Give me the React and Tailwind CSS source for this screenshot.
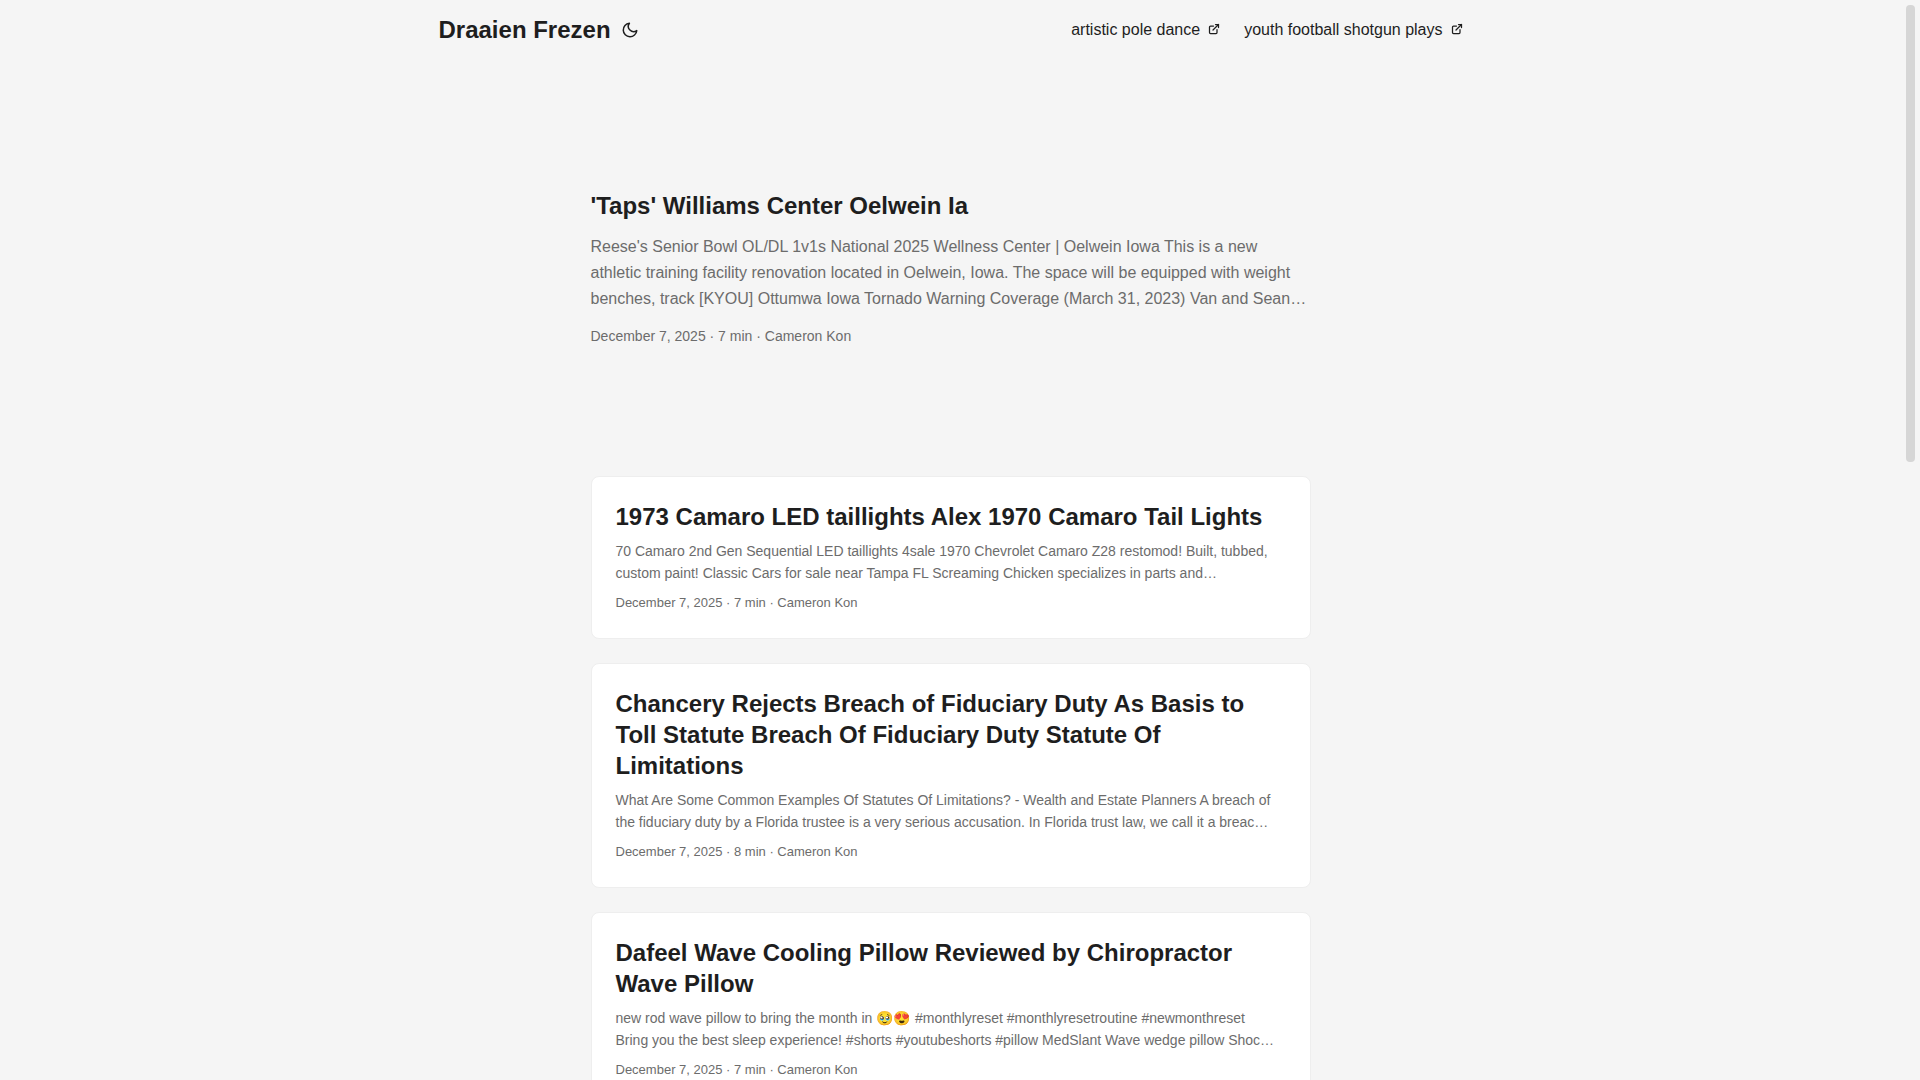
const menu = ["artistic pole dance", "youth football shotgun plays"];

const posts = [
  {
    title: "1973 Camaro LED taillights Alex 1970 Camaro Tail Lights",
    summary: [
      "70 Camaro 2nd Gen Sequential LED taillights 4sale 1970 Chevrolet Camaro Z28 restomod! Built, tubbed, custom paint! Classic Cars for sale near Tampa FL Screaming Chicken specializes in parts and…",
    ],
    meta: "December 7, 2025 · 7 min · Cameron Kon",
  },
  {
    title:
      "Chancery Rejects Breach of Fiduciary Duty As Basis to Toll Statute Breach Of Fiduciary Duty Statute Of Limitations",
    summary: [
      "What Are Some Common Examples Of Statutes Of Limitations? - Wealth and Estate Planners A breach of the fiduciary duty by a Florida trustee is a very serious accusation. In Florida trust law, we call it a breac…",
    ],
    meta: "December 7, 2025 · 8 min · Cameron Kon",
  },
  {
    title: "Dafeel Wave Cooling Pillow Reviewed by Chiropractor Wave Pillow",
    summary: [
      "new rod wave pillow to bring the month in 🥹😍 #monthlyreset #monthlyresetroutine #newmonthreset",
      "Bring you the best sleep experience! #shorts #youtubeshorts #pillow MedSlant Wave wedge pillow Shoc…",
    ],
    meta: "December 7, 2025 · 7 min · Cameron Kon",
  },
];

function MoonIcon() {
  return (
    <svg width="24" height="18" viewBox="0 0 24 24" fill="none" stroke="currentColor" strokeWidth="2" strokeLinecap="round" strokeLinejoin="round" aria-hidden="true">
      <path d="M21 12.79A9 9 0 1 1 11.21 3 7 7 0 0 0 21 12.79z" />
    </svg>
  );
}

function ExternalIcon() {
  return (
    <svg className="ml-2 inline align-baseline" width="12" height="12" viewBox="0 0 24 24" fill="none" stroke="currentColor" strokeWidth="2.5" strokeLinecap="round" strokeLinejoin="round" shapeRendering="geometricPrecision" aria-hidden="true">
      <path d="M18 13v6a2 2 0 01-2 2H5a2 2 0 01-2-2V8a2 2 0 012-2h6" />
      <path d="M15 3h6v6" />
      <path d="M10 14L21 3" />
    </svg>
  );
}

function Header() {
  return (
    <header>
      <nav className="mx-auto flex max-w-[1072px] flex-wrap justify-between px-6">
        <div className="flex items-center">
          <a href="#home" className="text-2xl leading-[60px] font-bold">
            Draaien Frezen
          </a>
          <button type="button" aria-label="Toggle theme" className="mx-[7px] flex cursor-pointer items-center">
            <MoonIcon />
          </button>
        </div>
        <ul className="flex gap-6 text-base leading-[60px]">
          {menu.map((label) => (
            <li key={label}>
              <a href="#menu">
                {label}
                <ExternalIcon />
              </a>
            </li>
          ))}
        </ul>
      </nav>
    </header>
  );
}

function PostCard({ post }) {
  return (
    <article className="mb-6 rounded-lg border border-[#eeeeee] bg-white p-6">
      <h2 className="text-2xl leading-[31px] font-bold">
        <a href="#post">{post.title}</a>
      </h2>
      <div className="my-2 text-sm leading-[22px] text-[#6c6c6c]">
        {post.summary.map((part) => (
          <p key={part}>{part}</p>
        ))}
      </div>
      <footer className="text-[13px] leading-[22px] text-[#6c6c6c]">{post.meta}</footer>
    </article>
  );
}

export default function App() {
  return (
    <div className="flex h-screen overflow-hidden bg-[#f5f5f5] font-['Liberation_Sans',Arial,'Noto_Color_Emoji',sans-serif] text-[#1e1e1e]">
      <div className="min-w-0 flex-1 overflow-y-auto [scrollbar-width:none]">
        <Header />
        <main className="mx-auto max-w-[768px] p-6">
          <article className="mt-6 mb-12 flex min-h-80 flex-col justify-center">
            <h1 className="text-2xl leading-[31px] font-bold">
              <a href="#post">'Taps' Williams Center Oelwein Ia</a>
            </h1>
            <p className="my-[13px] text-base leading-[26px] text-[#6c6c6c]">
              Reese's Senior Bowl OL/DL 1v1s National 2025 Wellness Center | Oelwein Iowa This is a new athletic
              training facility renovation located in Oelwein, Iowa. The space will be equipped with weight benches,
              track [KYOU] Ottumwa Iowa Tornado Warning Coverage (March 31, 2023) Van and Sean…
            </p>
            <footer className="text-sm leading-[22px] text-[#6c6c6c]">December 7, 2025 · 7 min · Cameron Kon</footer>
          </article>
          {posts.map((post) => (
            <PostCard key={post.title} post={post} />
          ))}
        </main>
      </div>
      <div className="w-[19px] shrink-0 p-[5px]" aria-hidden="true">
        <div className="h-[457px] rounded-sm bg-[#d6d6d6]" />
      </div>
    </div>
  );
}
